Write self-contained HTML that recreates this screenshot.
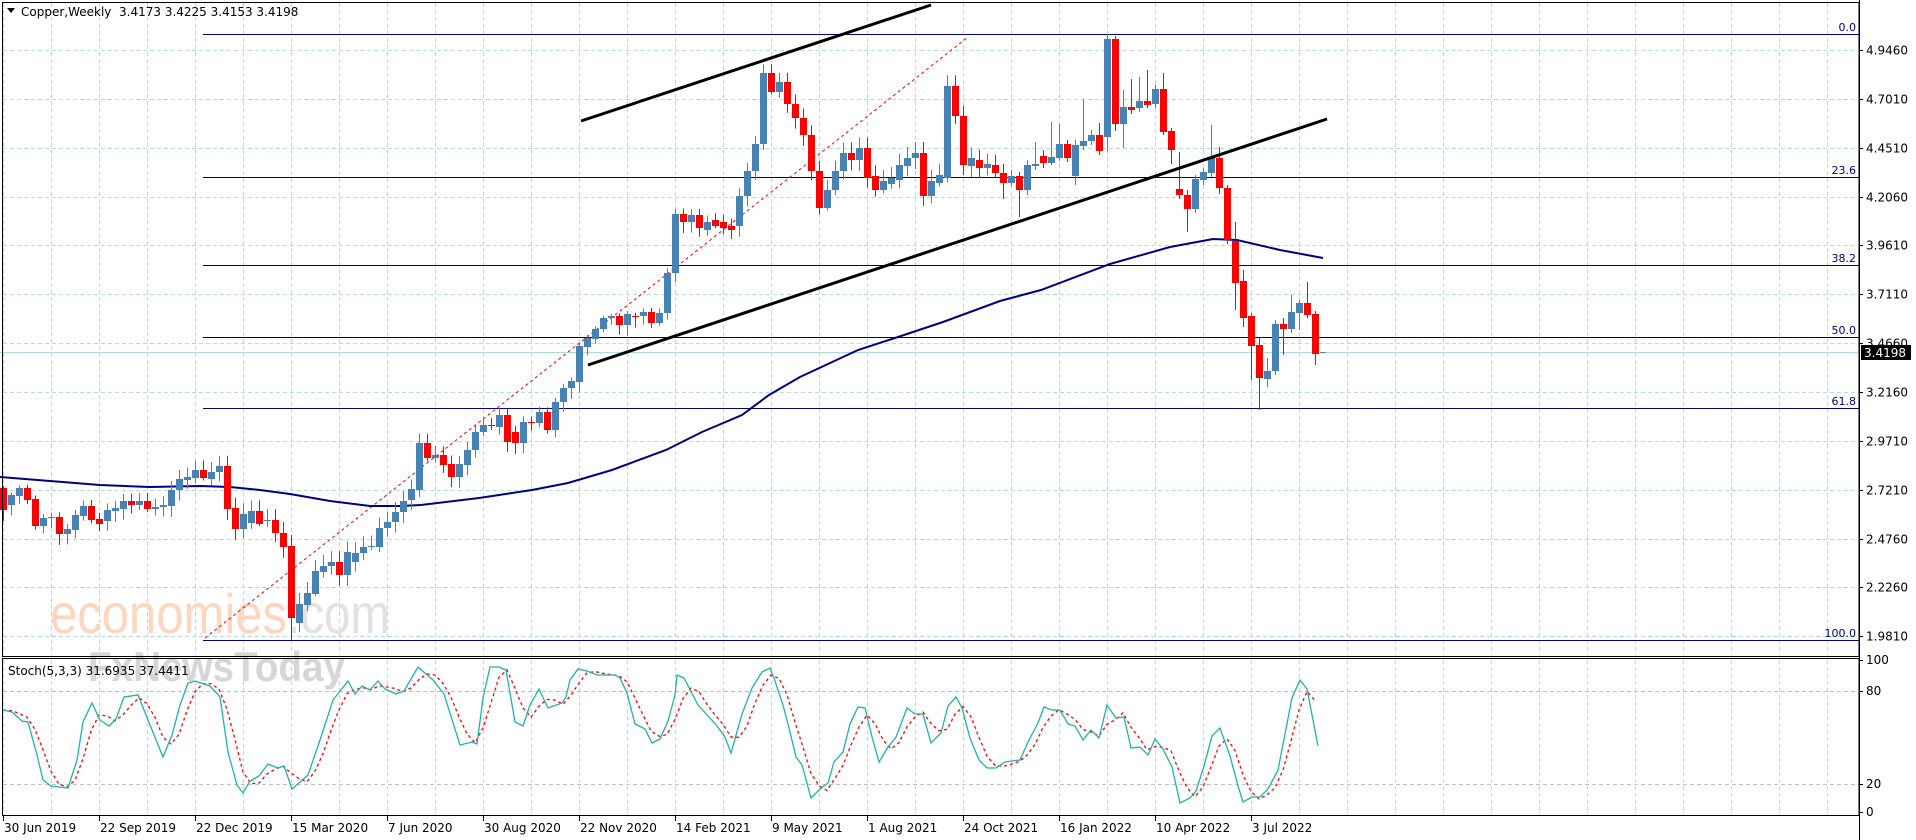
<!DOCTYPE html>
<html><head><meta charset="utf-8">
<style>
html,body{margin:0;padding:0;background:#fff;width:1916px;height:840px;overflow:hidden}
svg{display:block}
text{font-family:"DejaVu Sans","Liberation Sans",sans-serif;font-size:12px}
</style></head>
<body>
<svg id="s" width="1916" height="840" xmlns="http://www.w3.org/2000/svg"></svg>
<script>
var s=document.getElementById('s');var out=[];
function L(x1,y1,x2,y2,c,w,d){out.push('<line x1="'+x1+'" y1="'+y1+'" x2="'+x2+'" y2="'+y2+'" stroke="'+c+'" stroke-width="'+(w||1)+'"'+(d?' stroke-dasharray="'+d+'"':'')+'/>');}
function T(x,y,t,c,a,sz,extra){out.push('<text x="'+x+'" y="'+y+'" fill="'+(c||'#000')+'"'+(a?' text-anchor="'+a+'"':'')+(sz?' style="font-size:'+sz+'px"':'')+(extra||'')+'>'+t+'</text>');}
var R=1859;
// grid
for(var k=0;k<=38;k++){var x=3+48*k;if(x>R)break;L(x+.5,3,x+.5,655,'#b4dede',1,'4,3');L(x+.5,660,x+.5,815,'#b4dede',1,'4,3');}
var pl=['4.9460','4.7010','4.4510','4.2060','3.9610','3.7110','3.4660','3.2160','2.9710','2.7210','2.4760','2.2260','1.9810'];
for(var k=0;k<13;k++){var y=Math.round(50+k*48.86)+.5;L(3,y,R,y,'#b4dede',1,'4,3');L(R,y,R+4,y,'#000');T(1866,y+4,pl[k]);}
L(3,691.5,R,691.5,'#c0c0c0',1,'4,3');L(3,784.5,R,784.5,'#c0c0c0',1,'4,3');
// watermark
out.push('<text x="50" y="633" textLength="237" lengthAdjust="spacingAndGlyphs" style="font-size:56px;font-family:\'Liberation Sans\',sans-serif" fill="#fcd6be">economies</text>');
out.push('<text x="287" y="633" textLength="103" lengthAdjust="spacingAndGlyphs" style="font-size:56px;font-family:\'Liberation Sans\',sans-serif" fill="#e2e2e2">.com</text>');
out.push('<text x="88" y="681" textLength="257" lengthAdjust="spacingAndGlyphs" style="font-size:42px;font-family:\'Liberation Sans\',sans-serif;font-weight:bold" fill="#d6d6d6">FxNewsToday</text>');
// current price line
L(0,352.5,R,352.5,'#a8dce0');
// fib
var fib=[[34,'0.0'],[177,'23.6'],[265,'38.2'],[337,'50.0'],[408,'61.8'],[640,'100.0']];
fib.forEach(function(f){L(203,f[0]+.5,R,f[0]+.5,'#000080');T(1856,f[0]-3,f[1],'#000080','end',11);});
L(205,638,968,37,'#ff0000',1,'3,3');
// MA
var ma=[[0,477],[50,481],[100,485],[150,487],[200,486],[230,487],[260,490],[290,494],[330,501],[370,506],[400,506],[421,505],[479,498],[532,490],[568,483],[612,470],[666,450],[702,432],[742,415],[769,395],[800,377],[858,350],[898,337],[943,322],[1000,301],[1041,290],[1110,264],[1170,247],[1213,239],[1237,240],[1280,250],[1323,258]];
out.push('<polyline fill="none" stroke="#000080" stroke-width="2" points="'+ma.map(function(p){return p.join(',')}).join(' ')+'"/>');
// candles
var E=[[488,510,'r'],[495,505,'b'],[488,496,'b'],[488,500,'r'],[499,526,'r'],[518,526,'b'],[517,518,'b'],[517,534,'r'],[529,534,'b'],[515,530,'b'],[506,516,'b'],[506,520,'r'],[519,524,'r'],[510,521,'b'],[508,511,'b'],[501,509,'b'],[501,505,'r'],[501,505,'b'],[501,509,'r'],[507,509,'b'],[505,507,'b'],[490,506,'b'],[479,490,'b'],[477,480,'b'],[470,478,'b'],[470,478,'r'],[472,479,'b'],[466,472,'b'],[466,509,'r'],[508,529,'r'],[514,529,'b'],[511,523,'b'],[511,524,'r'],[520,521,'b'],[520,533,'r'],[533,547,'r'],[546,618,'r'],[604,623,'b'],[593,605,'b'],[571,594,'b'],[566,572,'b'],[562,566,'b'],[562,575,'r'],[552,575,'b'],[553,562,'b'],[547,553,'b'],[546,547,'b'],[528,547,'b'],[522,528,'b'],[512,522,'b'],[501,512,'b'],[489,500,'b'],[443,490,'b'],[443,458,'r'],[455,458,'b'],[455,465,'r'],[464,477,'r'],[464,477,'b'],[450,465,'b'],[432,450,'b'],[425,432,'b'],[425,426,'r'],[415,427,'b'],[415,442,'r'],[432,443,'r'],[422,443,'b'],[422,423,'r'],[412,423,'b'],[412,430,'r'],[402,430,'b'],[388,402,'b'],[381,388,'b'],[346,382,'b'],[338,347,'b'],[329,339,'b'],[318,329,'b'],[316,318,'b'],[316,325,'r'],[314,325,'b'],[316,317,'r'],[312,316,'b'],[312,323,'r'],[313,323,'b'],[273,313,'b'],[214,273,'b'],[214,222,'r'],[215,222,'b'],[215,228,'r'],[222,230,'b'],[220,226,'r'],[222,228,'r'],[226,230,'r'],[196,226,'b'],[171,196,'b'],[144,171,'b'],[73,144,'b'],[73,92,'r'],[82,92,'b'],[82,104,'r'],[104,118,'r'],[118,135,'r'],[135,171,'r'],[171,208,'r'],[190,208,'b'],[171,190,'b'],[153,171,'b'],[153,160,'r'],[148,160,'b'],[148,178,'r'],[176,190,'r'],[181,190,'b'],[178,184,'b'],[165,180,'b'],[158,166,'b'],[153,158,'b'],[153,196,'r'],[181,196,'b'],[175,183,'b'],[86,178,'b'],[86,116,'r'],[116,165,'r'],[158,166,'b'],[160,168,'r'],[164,168,'b'],[165,173,'r']];
var C=[];
E.forEach(function(e,i){var o,c;if(e[2]=='b'){o=e[1];c=e[0];}else{o=e[0];c=e[1];}var h=e[0]-2-Math.abs(Math.sin(i*3.1))*9;var l=e[1]+2+Math.abs(Math.cos(i*2.7))*9;if(i==36)l=640;C.push([i,o,c,h,l]);});
var fine=[[125,173,183,164,199],[126,183,176,170,186],[127,176,190,172,217],[128,190,165,160,195],[129,166,164,142,170],[130,156,163,150,168],[131,163,157,122,165],[132,158,144,124,161],[133,144,158,140,162],[134,176,145,140,185],[135,146,141,99,150],[136,141,135,130,145],[137,135,151,123,155],[138,137,39,34,151],[139,39,124,36,131],[140,124,107,90,148],[141,107,110,79,114],[142,108,101,77,112],[143,101,105,70,108],[144,104,89,85,108],[145,89,132,73,135],[146,131,150,128,164],[147,189,195,152,199],[148,195,209,190,232],[149,209,179,175,213],[150,180,172,168,185],[151,173,158,125,177],[152,158,188,147,194],[153,188,240,185,244],[154,241,283,222,310],[155,281,318,270,327],[156,316,346,313,380],[157,345,378,338,410],[158,379,371,358,387],[159,371,324,320,375],[160,324,329,318,355],[161,329,312,295,333],[162,313,303,300,330],[163,303,315,282,318],[164,314,354,311,365]];
C=C.concat(fine);
C.forEach(function(c){var x=3+8*c[0];var up=c[2]<c[1];var col=up?'#4682b4':'#ff0000';L(x+.5,c[3],x+.5,c[4],col);var t=Math.min(c[1],c[2]),b=Math.max(c[1],c[2]);out.push('<rect x="'+(x-3)+'" y="'+t+'" width="7" height="'+Math.max(1,b-t)+'" fill="'+col+'"/>');});
L(1320,352.5,1326,352.5,'#4682b4');
// trendlines
L(581,121,931,5,'#000',3);L(588,365,1327,119,'#000',3);
// stoch
var K=[[3,710],[12,712],[22,721],[28,722],[37,755],[43,780],[51,786],[68,788],[77,760],[83,722],[92,703],[100,720],[109,726],[116,719],[124,697],[138,695],[150,725],[163,757],[172,735],[180,705],[188,683],[195,681],[210,686],[220,697],[228,752],[237,785],[243,793],[250,781],[259,776],[268,764],[278,768],[284,766],[292,789],[299,783],[308,775],[320,740],[333,700],[348,681],[355,694],[362,686],[370,690],[378,681],[385,689],[396,694],[404,691],[418,667],[433,680],[444,694],[460,745],[472,742],[477,744],[483,698],[490,667],[499,667],[506,670],[515,722],[523,726],[530,705],[539,689],[548,708],[562,703],[566,697],[570,680],[578,669],[587,671],[597,675],[615,675],[620,678],[627,693],[635,724],[645,729],[652,743],[660,739],[668,721],[675,695],[677,675],[684,678],[698,705],[708,716],[717,726],[725,737],[731,753],[742,714],[752,688],[762,672],[770,668],[775,681],[783,705],[790,732],[796,757],[802,765],[811,798],[820,789],[828,783],[834,762],[843,752],[850,724],[858,707],[865,708],[872,737],[879,762],[888,747],[896,737],[907,708],[915,714],[923,714],[931,743],[941,733],[948,706],[956,697],[962,708],[970,738],[979,760],[987,768],[996,768],[1005,762],[1020,760],[1028,742],[1038,723],[1044,707],[1052,710],[1060,710],[1068,724],[1075,726],[1083,740],[1091,730],[1099,738],[1107,705],[1116,718],[1124,717],[1131,748],[1140,747],[1148,755],[1155,739],[1163,749],[1172,767],[1180,803],[1190,798],[1196,791],[1204,766],[1212,736],[1220,728],[1230,756],[1238,786],[1243,802],[1252,797],[1260,797],[1268,789],[1278,770],[1292,698],[1300,680],[1307,689],[1318,746]];
function kAt(x){for(var j=0;j<K.length-1;j++){if(x>=K[j][0]&&x<=K[j+1][0]){var a=K[j],b=K[j+1];return a[1]+(b[1]-a[1])*(x-a[0])/(b[0]-a[0]);}}return x<K[0][0]?K[0][1]:K[K.length-1][1];}
var D=[];for(var i=0;i<=164;i++){var x=3+8*i;var v=(kAt(x)+kAt(x-8)+kAt(x-16))/3;D.push(x+','+v.toFixed(1));}
out.push('<polyline fill="none" stroke="#ff0000" stroke-width="1.3" stroke-dasharray="3,3" points="'+D.join(' ')+'"/>');
out.push('<polyline fill="none" stroke="#20b2aa" stroke-width="1.3" points="'+K.map(function(p){return p.join(',')}).join(' ')+'"/>');
// frames
out.push('<rect x="2.5" y="2.5" width="'+(R-2.5)+'" height="654" fill="none" stroke="#000"/>');
out.push('<rect x="2.5" y="658.5" width="'+(R-2.5)+'" height="157" fill="none" stroke="#000"/>');
L(R+.5,0,R+.5,840,'#000');
// header
out.push('<polygon points="7,8 15,8 11,13" fill="#000"/>');
T(21,16,'Copper,Weekly&#160;&#160;3.4173 3.4225 3.4153 3.4198');
T(8,675,'Stoch(5,3,3) 31.6935 37.4411');
// price tag
out.push('<rect x="1861" y="345" width="50" height="15" fill="#000"/>');T(1864,357,'3.4198','#fff');
// stoch axis
[[100,660],[80,691],[20,784],[0,812]].forEach(function(a){L(R,a[1]+.5,R+4,a[1]+.5,'#000');T(1866,a[1]+4,a[0]);});
// dates
var dates=['30 Jun 2019','22 Sep 2019','22 Dec 2019','15 Mar 2020','7 Jun 2020','30 Aug 2020','22 Nov 2020','14 Feb 2021','9 May 2021','1 Aug 2021','24 Oct 2021','16 Jan 2022','10 Apr 2022','3 Jul 2022'];
dates.forEach(function(d,k){var x=3+96*k;L(x+.5,816,x+.5,821,'#000');T(x+1,832,d);});
s.innerHTML=out.join('');
</script>
</body></html>
